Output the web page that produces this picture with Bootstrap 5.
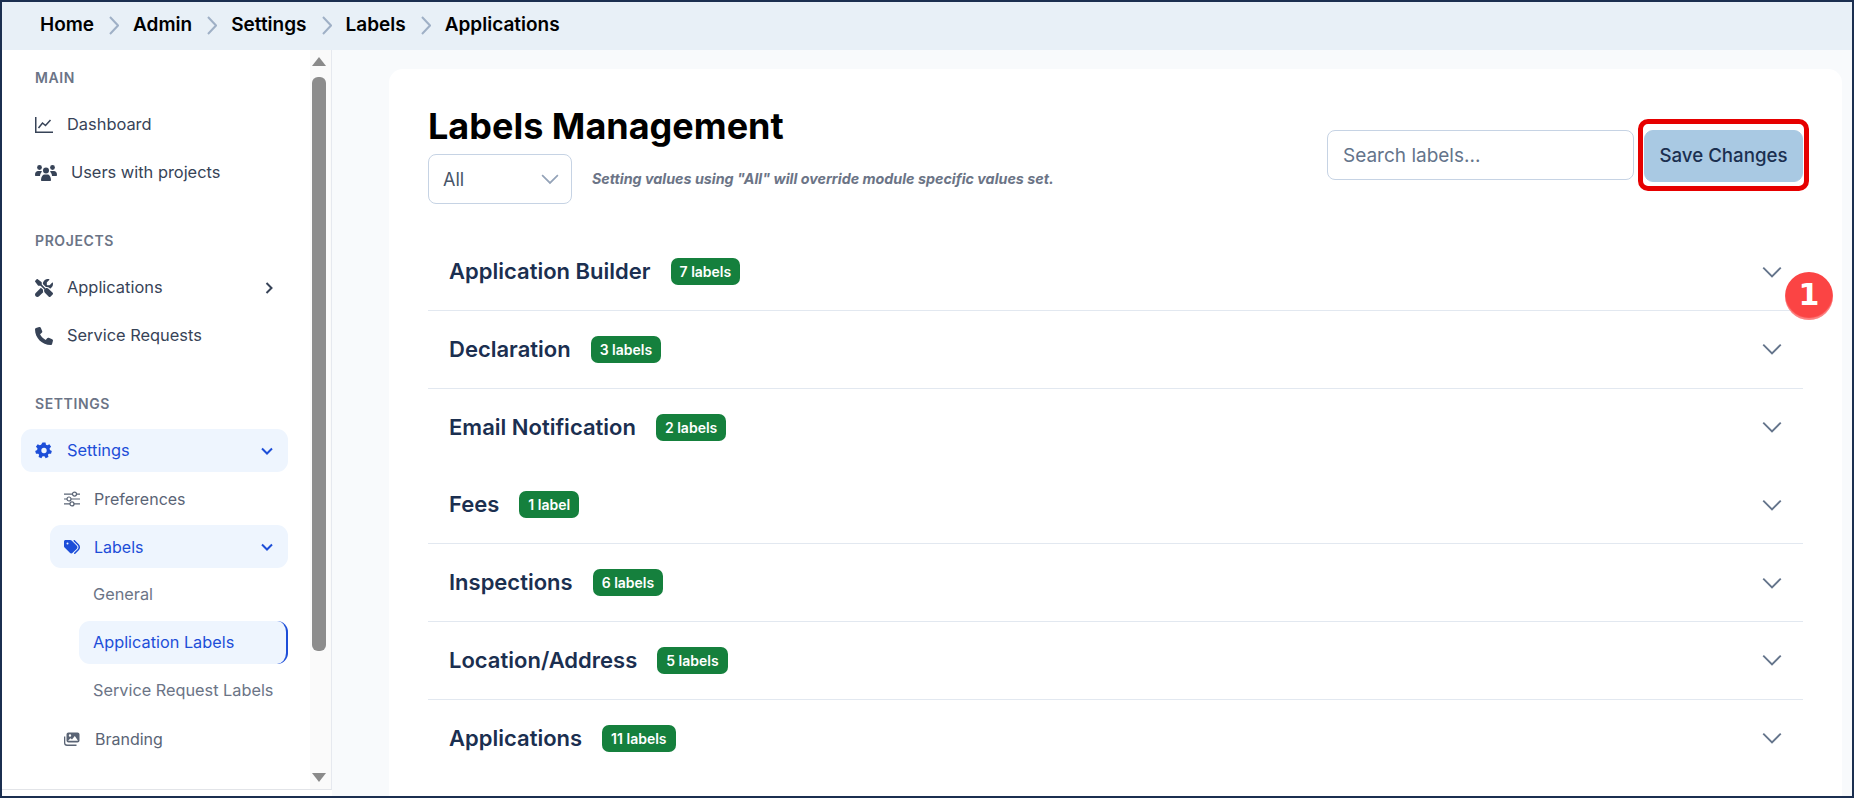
<!DOCTYPE html>
<html lang="en">
<head>
    <meta charset="UTF-8">
    <meta name="viewport" content="width=device-width, initial-scale=1.0">
    <title>Labels Management</title>
    <link href="https://cdn.jsdelivr.net/npm/bootstrap@5.3.0/dist/css/bootstrap.min.css" rel="stylesheet">
    <style>
        html, body { height: 100%; overflow: hidden; }
        body { font-family: Inter, "Liberation Sans", sans-serif; background: #fff; }
        .app-frame { height: 798px; border: 2px solid #1b2f50; overflow: hidden; display: flex; flex-direction: column; }

        .top-crumbs { height: 48px; flex: none; background: #e8f0f7; padding-left: 38px; padding-bottom: 2px; display: flex; align-items: center; }
        .top-crumbs .breadcrumb { --bs-breadcrumb-margin-bottom: 0; --bs-breadcrumb-item-padding-x: 15px; font-size: 19px; font-weight: 600; }
        .top-crumbs .breadcrumb-item, .top-crumbs .breadcrumb-item a { color: #000; text-decoration: none; }
        .top-crumbs .breadcrumb-item + .breadcrumb-item::before { content: none; }
        .crumb-sep { width: 10px; height: 19px; color: #9fb0c6; margin-right: 14px; flex: none; }

        .side-wrap { width: 330px; flex: none; display: flex; border-right: 1px solid #e6e9ef; border-bottom: 1px solid #e2e4e8; margin-bottom: 6px; }
        .side-menu { flex: 1; min-width: 0; padding: 18px 22px 0 19px; }
        .menu-head { font-size: 14px; line-height: 20px; font-weight: 600; letter-spacing: .6px; color: #6b7486; padding-left: 14px; margin: 37px 0 15px; }
        .menu-head:first-child { margin-top: 0; }
        .menu-row { height: 43px; margin-bottom: 5px; display: flex; align-items: center; border-radius: 11px; color: #374357; font-size: 16.4px; font-weight: 400; padding-left: 14px; padding-right: 15px; text-decoration: none; white-space: nowrap; }
        .menu-row svg.ico { width: 18px; height: 18px; flex: none; margin-right: 14px; fill: currentColor; }
        .menu-row .chev { width: 12px; height: 12px; margin-left: auto; fill: none; stroke: currentColor; stroke-width: 2; flex: none; }
        .menu-row .chev-side { margin-right: -2px; }
        .menu-row.on { background: #eef5fe; color: #1d4ed8; }
        .lvl-two { margin-left: 29px; padding-left: 14px; color: #5a6475; font-size: 16px; }
        .lvl-two svg.ico { width: 16px; height: 16px; margin-right: 14px; }
        .lvl-three { margin-left: 58px; padding-left: 14px; padding-right: 0; color: #6b7486; font-size: 16.3px; }
        .lvl-three.on { border-right: 2px solid #1d4ed8; color: #1d4ed8; }

        .fake-scroll { width: 21px; flex: none; background: #fafafa; display: flex; flex-direction: column; align-items: center; padding: 7px 4px 7px 0; }
        .fake-scroll i { display: block; width: 0; height: 0; border-left: 7px solid transparent; border-right: 7px solid transparent; }
        .arrow-up { border-bottom: 9px solid #8a8a8a; }
        .arrow-down { border-top: 9px solid #8a8a8a; margin-top: auto; }
        .fake-scroll b { display: block; width: 14px; height: 574px; margin-top: 11px; background: #8c8c8c; border-radius: 6px; }

        .main-pane { flex: 1; min-width: 0; background: #f8fafc; padding: 19px 10px 0 57px; }
        .sheet { position: relative; background: #fff; border-radius: 14px 14px 0 0; height: 100%; padding: 33px 39px 0; }
        .page-title { font-size: 36px; line-height: 48px; font-weight: 700; color: #000; margin: 0 0 4px; }
        .all-select { width: 144px; height: 50px; border-color: #c6d3e4; border-radius: 8px; color: #475569; font-size: 18px; padding-left: 14px; padding-top: 7px;
            --bs-form-select-bg-img: url("data:image/svg+xml,%3csvg xmlns='http://www.w3.org/2000/svg' viewBox='0 0 16 16'%3e%3cpath fill='none' stroke='%2394a3b8' stroke-width='1.5' d='M1 4.5l7 7 7-7'/%3e%3c/svg%3e"); background-size: 18px 18px; }
        .note-text { font-size: 14.3px; font-weight: 700; font-style: italic; color: #6b7486; margin-left: 20px; }
        .search-box { width: 307px; height: 50px; border-color: #c6d3e4; border-radius: 8px; font-size: 19px; padding-left: 15px; }
        .search-box::placeholder { color: #64748b; }
        .save-wrap { position: relative; margin-left: 10px; }
        .save-btn { width: 159px; height: 52px; background: #a9c9e3; border-color: #a9c9e3; color: #1b2f50; font-size: 18.7px; font-weight: 500; border-radius: 9px; padding: 0; }
        .red-frame { position: absolute; left: -6px; right: -6px; top: -11px; bottom: -9px; border: 5px solid #e60000; border-radius: 10px; pointer-events: none; }
        .tool-bar { margin-top: 28px; }

        .label-groups { margin-top: 29px;
            --bs-accordion-border-color: #e2e8f0;
            --bs-accordion-btn-icon: url("data:image/svg+xml,%3csvg xmlns='http://www.w3.org/2000/svg' viewBox='0 0 16 16'%3e%3cpath fill='none' stroke='%2364748b' stroke-width='1.5' d='M1 4.5l7 7 7-7'/%3e%3c/svg%3e");
            --bs-accordion-btn-icon-width: 20px; }
        .label-groups .accordion-item { height: 77.8px; }
        .label-groups .accordion-button { height: 77px; padding: 0 21px 0 21px; font-size: 22px; font-weight: 600; color: #1b2f50; background: #fff; box-shadow: none; }
        .count-tag { background: #15803d; color: #fff; font-size: 14px; font-weight: 600; border-radius: 7px; padding: 5px 9px; margin-left: 20px; line-height: 17px; }
        .step-dot { position: absolute; left: 1396px; top: 203px; width: 48px; height: 48px; border-radius: 50%; background: #fb4444; color: #fff; font-size: 30px; font-weight: 800; line-height: 46px; text-align: center; font-family: "DejaVu Sans", sans-serif; box-shadow: inset 0 -2px 1px rgba(255,255,255,.35); }
    </style>
</head>
<body>
<div class="app-frame">
    <nav class="top-crumbs" aria-label="breadcrumb">
        <ol class="breadcrumb align-items-center">
            <li class="breadcrumb-item ps-0"><a href="#">Home</a></li>
            <li class="breadcrumb-item d-flex align-items-center"><svg class="crumb-sep" viewBox="0 0 10 19"><path d="M1 1l8 8.5L1 18" fill="none" stroke="currentColor" stroke-width="2"/></svg><a href="#">Admin</a></li>
            <li class="breadcrumb-item d-flex align-items-center"><svg class="crumb-sep" viewBox="0 0 10 19"><path d="M1 1l8 8.5L1 18" fill="none" stroke="currentColor" stroke-width="2"/></svg><a href="#">Settings</a></li>
            <li class="breadcrumb-item d-flex align-items-center"><svg class="crumb-sep" viewBox="0 0 10 19"><path d="M1 1l8 8.5L1 18" fill="none" stroke="currentColor" stroke-width="2"/></svg><a href="#">Labels</a></li>
            <li class="breadcrumb-item d-flex align-items-center"><svg class="crumb-sep" viewBox="0 0 10 19"><path d="M1 1l8 8.5L1 18" fill="none" stroke="currentColor" stroke-width="2"/></svg><a href="#">Applications</a></li>
        </ol>
    </nav>

    <div class="d-flex flex-grow-1" style="min-height:0">
        <div class="side-wrap">
            <aside class="side-menu">
                <div class="menu-head">MAIN</div>
                <a class="menu-row" href="#"><svg class="ico" viewBox="0 0 18 18"><path d="M0 1h1.5v14.5H18V17H0z"/><path d="M3.5 12l4-5 3 2.5L15.5 4" fill="none" stroke="currentColor" stroke-width="1.5"/></svg>Dashboard</a>
                <a class="menu-row" href="#"><svg class="ico" viewBox="0 0 22 18" style="width:22px"><circle cx="4.5" cy="3.5" r="2.4"/><circle cx="17.5" cy="3.5" r="2.4"/><circle cx="11" cy="6.5" r="3"/><path d="M0 11c0-3 1.500-4 3-4h3c.5 0 1 .2 1 .5C6 9 5 10 5 12H1c-.6 0-1-.4-1-1zM22 11c0-3-1.500-4-3-4h-3c-.5 0-1 .2-1 .5 1 1.500 2 2.500 2 4.500h4c.6 0 1-.4 1-1zM6 16c0-3.500 2-5.500 3.500-5.500h3c1.500 0 3.500 2 3.500 5.500 0 .6-.4 1-1 1H7c-.6 0-1-.4-1-1z"/></svg>Users with projects</a>

                <div class="menu-head">PROJECTS</div>
                <a class="menu-row" href="#"><svg class="ico" viewBox="0 0 512 512"><path d="M78.600 5C69.100-2.400 55.600-1.500 47 7L7 47c-8.500 8.500-9.400 22-2.100 31.600l80 104c4.500 5.900 11.600 9.400 19 9.400h54.100l109 109c-14.700 29-10 65.400 14.300 89.600l112 112c12.500 12.500 32.800 12.500 45.300 0l64-64c12.500-12.500 12.500-32.800 0-45.300l-112-112c-24.200-24.200-60.600-29-89.600-14.300l-109-109V104c0-7.500-3.500-14.500-9.400-19L78.600 5zM19.900 396.100C7.200 408.800 0 426.100 0 444.100C0 481.600 30.400 512 67.900 512c18 0 35.300-7.200 48-19.900L233.700 374.300c-7.800-20.900-9-43.600-3.600-65.100l-61.700-61.700L19.900 396.100zM512 144c0-10.500-1.100-20.700-3.200-30.500c-2.400-11.200-16.100-14.100-24.200-6l-63.900 63.900c-3 3-7.100 4.700-11.300 4.700H352c-8.800 0-16-7.200-16-16V102.600c0-4.200 1.700-8.300 4.700-11.300l63.900-63.900c8.100-8.100 5.200-21.800-6-24.200C388.700 1.100 378.500 0 368 0C288.500 0 224 64.500 224 144l0 .8 85.300 85.300c36-9.100 75.800 .5 104 28.700L429 274.500c49-23 83-72.800 83-130.500z"/></svg>Applications<svg class="chev chev-side" viewBox="0 0 12 12"><path d="M3.500 1l5 5-5 5"/></svg></a>
                <a class="menu-row" href="#"><svg class="ico" viewBox="0 0 512 512"><path d="M164.900 24.600c-7.700-18.600-28-28.500-47.400-23.200l-88 24C12.100 30.200 0 46 0 64C0 311.400 200.600 512 448 512c18 0 33.800-12.100 38.600-29.500l24-88c5.300-19.400-4.600-39.700-23.200-47.400l-96-40c-16.300-6.800-35.200-2.100-46.300 11.600L304.700 368C234.300 334.700 177.300 277.700 144 207.300L193.300 167c13.700-11.200 18.400-30 11.600-46.300l-40-96z"/></svg>Service Requests</a>

                <div class="menu-head">SETTINGS</div>
                <a class="menu-row on" href="#"><svg class="ico" viewBox="0 0 18 18"><path fill-rule="evenodd" d="M7.300 0h3.400l.5 2.500 1.500.7 2.300-1.100 2 2.700-1.700 1.800.3 1.700 2.200 1.200-.9 3.200-2.500-.1-1 1.300.6 2.500-3.100 1.200-1.400-2.100H7.400L6 17.600l-3.100-1.200.6-2.500-1-1.300L0 12.700l-.9-3.200L1.300 8.300l.3-1.700L-.1 4.800l2-2.700 2.300 1.100 1.500-.7zM9 6a3 3 0 100 6 3 3 0 000-6z" transform="translate(1 .5) scale(.89)"/></svg>Settings<svg class="chev" viewBox="0 0 12 12"><path d="M1 3.500l5 5 5-5"/></svg></a>
                <a class="menu-row lvl-two" href="#"><svg class="ico" viewBox="0 0 16 16"><path d="M0 2.500h16v1.200H0zM0 7.400h16v1.200H0zM0 12.300h16v1.200H0z"/><circle cx="10.500" cy="3.100" r="2" fill="#fff" stroke="currentColor" stroke-width="1.200"/><circle cx="5" cy="8" r="2" fill="#fff" stroke="currentColor" stroke-width="1.200"/><circle cx="8" cy="12.900" r="2" fill="#fff" stroke="currentColor" stroke-width="1.200"/></svg>Preferences</a>
                <a class="menu-row lvl-two on" href="#"><svg class="ico" viewBox="0 0 512 512"><path d="M345 39.100L472.800 168.400c52.400 53 52.400 138.200 0 191.200L360.800 472.900c-9.300 9.400-24.500 9.500-33.900 .2s-9.500-24.500-.2-33.900L438.600 325.900c33.900-34.300 33.900-89.400 0-123.700L310.900 72.900c-9.300-9.400-9.200-24.600 .2-33.900s24.600-9.200 33.900 .2zM0 229.500V80C0 53.500 21.500 32 48 32H197.500c17 0 33.300 6.700 45.300 18.700l168 168c25 25 25 65.500 0 90.500L277.300 442.700c-25 25-65.500 25-90.500 0l-168-168C6.700 262.700 0 246.500 0 229.500zM144 144a32 32 0 1 0 -64 0 32 32 0 1 0 64 0z"/></svg>Labels<svg class="chev" viewBox="0 0 12 12"><path d="M1 3.500l5 5 5-5"/></svg></a>
                <a class="menu-row lvl-three" href="#">General</a>
                <a class="menu-row lvl-three on" href="#">Application Labels</a>
                <a class="menu-row lvl-three" href="#">Service Request Labels</a>
                <a class="menu-row lvl-two" href="#"><svg class="ico" viewBox="0 0 16 16" style="margin-right:15px"><path fill-rule="evenodd" d="M4.500 1.500h9c1.100 0 2 .9 2 2v6c0 1.100-.9 2-2 2h-9c-1.100 0-2-.9-2-2v-6c0-1.100.9-2 2-2zM4 9.800h10L10.800 5 8 8.500 6.500 7.200zM6 3.300a1.200 1.200 0 100 2.400 1.200 1.200 0 000-2.400z"/><path d="M0 5.500h1.300v6.300c0 1 .8 1.700 1.700 1.700h9.500V15H3c-1.700 0-3-1.300-3-3z"/></svg>Branding</a>
            </aside>
            <div class="fake-scroll"><i class="arrow-up"></i><b></b><i class="arrow-down"></i></div>
        </div>

        <main class="main-pane">
            <section class="sheet">
                <div class="d-flex justify-content-between align-items-start">
                    <div>
                        <h1 class="page-title">Labels Management</h1>
                        <div class="d-flex align-items-center">
                            <select class="form-select all-select"><option>All</option></select>
                            <span class="note-text">Setting values using "All" will override module specific values set.</span>
                        </div>
                    </div>
                    <div class="d-flex tool-bar">
                        <input type="text" class="form-control search-box" placeholder="Search labels...">
                        <div class="save-wrap">
                            <button class="btn save-btn">Save Changes</button>
                            <span class="red-frame"></span>
                        </div>
                    </div>
                </div>

                <div class="accordion accordion-flush label-groups">
                    <div class="accordion-item"><button class="accordion-button collapsed" type="button">Application Builder<span class="badge count-tag">7 labels</span></button></div>
                    <div class="accordion-item"><button class="accordion-button collapsed" type="button">Declaration<span class="badge count-tag">3 labels</span></button></div>
                    <div class="accordion-item"><button class="accordion-button collapsed" type="button">Email Notification<span class="badge count-tag">2 labels</span></button></div>
                    <div class="accordion-item"><button class="accordion-button collapsed" type="button">Fees<span class="badge count-tag">1 label</span></button></div>
                    <div class="accordion-item"><button class="accordion-button collapsed" type="button">Inspections<span class="badge count-tag">6 labels</span></button></div>
                    <div class="accordion-item"><button class="accordion-button collapsed" type="button">Location/Address<span class="badge count-tag">5 labels</span></button></div>
                    <div class="accordion-item"><button class="accordion-button collapsed" type="button">Applications<span class="badge count-tag">11 labels</span></button></div>
                </div>
                <span class="step-dot">1</span>
            </section>
        </main>
    </div>
</div>
<script src="https://cdn.jsdelivr.net/npm/bootstrap@5.3.0/dist/js/bootstrap.bundle.min.js"></script>
</body>
</html>
